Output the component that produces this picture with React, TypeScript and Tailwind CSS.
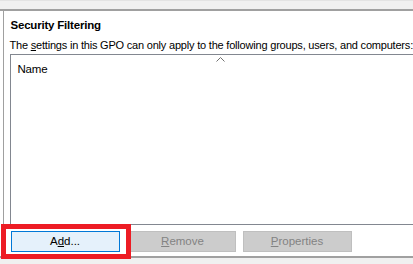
export default function App() {
  return (
    <div className="relative w-[413px] h-[264px] overflow-hidden bg-white font-['Liberation_Sans',Arial,sans-serif] text-black">
      {/* top strip */}
      <div className="h-[9px] bg-[#f0f0f0] border-t border-[#e3e3e3]" />
      <div className="h-[2px] bg-[#a0a0a0]" />

      <div className="flex h-[245px]">
        <div className="w-[3px]" />
        <div className="w-px bg-[#a0a0a0]" />
        <div className="flex-1 flex flex-col">
          <div className="pl-[7px] pt-[7px] h-[20px] text-[11.5px] leading-[14px] font-bold tracking-[-0.2px]">Security Filtering</div>
          <div className="pl-[6px] pt-[8px] h-[23px] text-[11px] leading-[13px] tracking-[-0.2px] whitespace-nowrap">
            The <span className="underline">s</span>ettings in this GPO can only apply to the following groups, users, and computers:
          </div>
          <div className="ml-[6px] h-[171px] border-t border-l border-b border-[#828790] relative">
            <svg className="absolute left-[205px] top-[2px]" width="9" height="5" viewBox="0 0 9 5">
              <path d="M0.5 4.5 L4.5 0.5 L8.5 4.5" fill="none" stroke="#707070" strokeWidth="1" />
            </svg>
            <div className="pl-[7px] pt-[8px] text-[11.5px] leading-[13px] tracking-[-0.2px]">Name</div>
          </div>
          <div className="flex pl-[7px] pt-[6px]">
            <button className="w-[109px] h-[21px] bg-[#e5f1fb] border border-[#0078d7] text-[11.5px] leading-[13px]">
              A<span className="underline">d</span>d...
            </button>
            <button className="ml-[10px] w-[106px] h-[21px] bg-[#cccccc] border border-[#bfbfbf] text-[11.5px] leading-[13px] text-[#838383]">
              <span className="underline">R</span>emove
            </button>
            <button className="ml-[7px] w-[109px] h-[21px] bg-[#cccccc] border border-[#bfbfbf] text-[11.5px] leading-[13px] text-[#838383]">
              <span className="underline">P</span>roperties
            </button>
          </div>
        </div>
      </div>

      {/* bottom strip */}
      <div className="h-[2px] bg-[#a0a0a0]" />
      <div className="h-[6px] bg-[#f0f0f0]" />

      {/* highlight annotation */}
      <div className="absolute left-[1px] top-[224px] w-[130px] h-[35px] border-[5px] border-[#ed1c24]" />
    </div>
  );
}
